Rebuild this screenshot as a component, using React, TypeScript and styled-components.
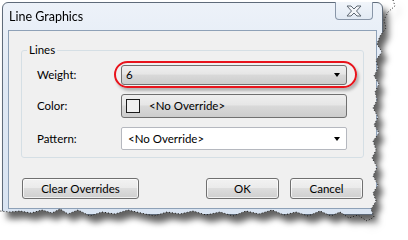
import React from "react";
import styled, { createGlobalStyle } from "styled-components";

const Global = createGlobalStyle`
  html, body { margin: 0; padding: 0; background: #ffffff; }
  body { width: 408px; height: 240px; overflow: hidden; }
  * { box-sizing: border-box; }
`;

const FONT = `"Lato", "Liberation Sans", sans-serif`;

const tear: [number, number][] = [
  [393, 0], [395, 6], [388, 12], [384, 20], [386, 28], [380, 36], [377, 44], [382, 52],
  [376, 60], [378, 68], [374, 76], [379, 84], [375, 92], [377, 100], [373, 108], [378, 117],
  [374, 125], [379, 133], [373, 141], [376, 150], [372, 158], [377, 167], [373, 176],
  [378, 185], [373, 193], [376, 201], [371, 209], [374, 217], [367, 221],
  [358, 215], [349, 218], [340, 212], [331, 216], [320, 211], [308, 216], [296, 212],
  [284, 215], [272, 210], [259, 214], [246, 211], [233, 216], [220, 212], [206, 215],
  [193, 211], [180, 214], [167, 212], [154, 216], [141, 213], [128, 210], [115, 214],
  [102, 212], [90, 216], [78, 210], [68, 214], [60, 209], [52, 213], [42, 210], [31, 213],
  [20, 211], [10, 212], [0, 211],
];

const clip = `polygon(0px 0px, ${tear.map(([x, y]) => `${x}px ${y}px`).join(", ")})`;
const linePts = tear.map(([x, y]) => `${x},${y}`).join(" ");

const Stage = styled.div`
  position: relative;
  width: 408px;
  height: 240px;
  filter: drop-shadow(5px 7px 3px rgba(0, 0, 0, 0.62));
`;

const Paper = styled.div<{ $clip: string }>`
  width: 408px;
  height: 240px;
  padding: 2px 0 0 2px;
  clip-path: ${(p) => p.$clip};
`;

const TearLine = styled.svg`
  position: absolute;
  left: 0;
  top: 0;
  width: 408px;
  height: 240px;
  pointer-events: none;
`;

const Window = styled.div`
  width: 381px;
  height: 213px;
  border: 1px solid #5f6b7a;
  border-radius: 6px 6px 0 0;
  background: linear-gradient(180deg, #edf2f9 0%, #dfe8f4 40%, #d9e4f2 100%);
  padding: 0 5px 5px 5px;
  display: flex;
  flex-direction: column;
  font-family: ${FONT};
  font-size: 11.5px;
  color: #000;
`;

const TitleBar = styled.div`
  height: 27px;
  display: flex;
  align-items: center;
  justify-content: space-between;
`;

const Title = styled.span`
  padding-left: 1px;
  font-size: 12.5px;
  color: #000;
`;

const CloseButton = styled.div`
  align-self: flex-start;
  margin-top: -1px;
  margin-right: 4px;
  width: 38px;
  height: 18px;
  border: 1px solid #8996a8;
  border-top: none;
  border-radius: 0 0 4px 4px;
  background: linear-gradient(180deg, #f1f5fa 0%, #e2eaf4 100%);
  display: flex;
  align-items: center;
  justify-content: center;
`;

const Content = styled.div`
  flex: 1;
  border: 1px solid #8ea1b7;
  background: #f0f0f0;
  padding: 12px 12px 9px 12px;
  display: flex;
  flex-direction: column;
`;

const Group = styled.fieldset`
  margin: 0;
  border: 1px solid #d5dfe5;
  border-radius: 3px;
  padding: 8px 15px 7px 15px;
  min-width: 0;
`;

const Legend = styled.legend`
  padding: 0 2px;
  margin-left: -10px;
  line-height: 14px;
  height: 14px;
`;

const Grid = styled.div`
  display: grid;
  grid-template-columns: 84px 226px;
  grid-template-rows: 20px 24px 23px;
  row-gap: 9px;
  align-items: center;
`;

const Label = styled.span`
  line-height: 14px;
`;

const Field = styled.div<{ $kind: "combo" | "button" | "edit" }>`
  position: relative;
  height: 100%;
  display: flex;
  align-items: center;
  border-radius: ${(p) => (p.$kind === "edit" ? "2px" : "3px")};
  border: 1px solid ${(p) => (p.$kind === "edit" ? "#b5b8bf" : "#707070")};
  background: ${(p) =>
    p.$kind === "edit"
      ? "#ffffff"
      : "linear-gradient(180deg, #efefef 0%, #e6e6e6 45%, #d9d9d9 50%, #cccccc 100%)"};
  padding: ${(p) => (p.$kind === "button" ? "0 4px" : p.$kind === "edit" ? "0 6px 0 6px" : "0 6px 0 4px")};
  gap: 9px;
`;

const FieldText = styled.span`
  flex: 1;
  line-height: 14px;
`;

const Arrow = styled.span`
  width: 0;
  height: 0;
  border-left: 3.5px solid transparent;
  border-right: 3.5px solid transparent;
  border-top: 4px solid #000;
`;

const Swatch = styled.span`
  width: 14px;
  height: 14px;
  border: 1px solid #1a1a1a;
  background: #f0f0f0;
`;

const Highlight = styled.span`
  position: absolute;
  left: -8px;
  right: -11px;
  top: -5px;
  bottom: -4px;
  border: 2px solid #e8141c;
  border-radius: 15px;
  box-shadow: 2px 3px 3px rgba(0, 0, 0, 0.25);
  pointer-events: none;
`;

const ButtonRow = styled.div`
  margin-top: 20px;
  padding: 0 1px 0 1px;
  display: flex;
  gap: 11px;
`;

const Button = styled.div<{ $w: number; $push?: boolean }>`
  width: ${(p) => p.$w}px;
  height: 21px;
  margin-left: ${(p) => (p.$push ? "auto" : "0")};
  border: 1px solid #707070;
  border-radius: 3px;
  background: linear-gradient(180deg, #f2f2f2 0%, #ebebeb 45%, #dddddd 50%, #cfcfcf 100%);
  box-shadow: inset 0 0 0 1px rgba(255, 255, 255, 0.7);
  display: flex;
  align-items: center;
  justify-content: center;
  line-height: 14px;
`;

export default function App() {
  return (
    <>
      <Global />
      <Stage>
        <Paper $clip={clip}>
          <Window>
            <TitleBar>
              <Title>Line Graphics</Title>
              <CloseButton>
                <svg width="16" height="12" viewBox="0 0 16 12">
                  <polygon
                    points="1,1 5,1 8,4 11,1 15,1 10.5,6 15,11 11,11 8,8 5,11 1,11 5.5,6"
                    fill="#f3f5f8"
                    stroke="#5f6873"
                    strokeWidth="1"
                    strokeLinejoin="round"
                  />
                </svg>
              </CloseButton>
            </TitleBar>
            <Content>
              <Group>
                <Legend>Lines</Legend>
                <Grid>
                  <Label>Weight:</Label>
                  <Field $kind="combo">
                    <FieldText>6</FieldText>
                    <Arrow />
                    <Highlight />
                  </Field>
                  <Label>Color:</Label>
                  <Field $kind="button">
                    <Swatch />
                    <FieldText>&lt;No Override&gt;</FieldText>
                  </Field>
                  <Label>Pattern:</Label>
                  <Field $kind="edit">
                    <FieldText>&lt;No Override&gt;</FieldText>
                    <Arrow />
                  </Field>
                </Grid>
              </Group>
              <ButtonRow>
                <Button $w={117}>Clear Overrides</Button>
                <Button $w={73} $push>OK</Button>
                <Button $w={73}>Cancel</Button>
              </ButtonRow>
            </Content>
          </Window>
        </Paper>
        <TearLine viewBox="0 0 408 240">
          <polyline points={linePts} fill="none" stroke="#1c1c1c" strokeWidth="1" strokeDasharray="1 2" />
        </TearLine>
      </Stage>
    </>
  );
}
